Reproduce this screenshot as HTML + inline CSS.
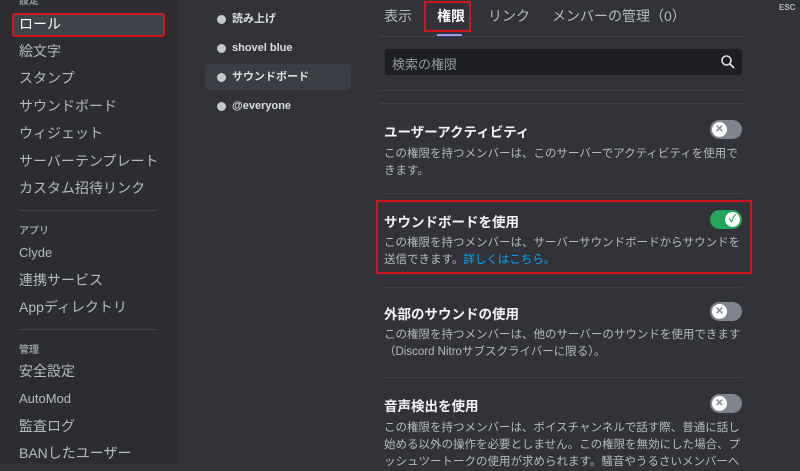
<!DOCTYPE html>
<html><head><meta charset="utf-8"><style>
*{margin:0;padding:0;box-sizing:border-box}
body{width:800px;height:464px;overflow:hidden;background:#313338;font-family:"Liberation Sans","Noto Sans CJK JP",sans-serif;position:relative;color:#dbdee1}
.a{position:absolute;white-space:nowrap}
.side{position:absolute;left:0;top:0;width:178px;height:464px;background:#2b2d31}
.si{position:absolute;left:19px;font-size:14px;color:#b5bac1;line-height:18px}
.hd{position:absolute;left:19px;font-size:10px;color:#949ba4;font-weight:bold}
.dv{position:absolute;height:1px;background:#3f4147}
.role{position:absolute;left:232px;font-size:11px;font-weight:bold;color:#dbdee1;line-height:14px}
.dot{position:absolute;left:217px;width:9px;height:9px;border-radius:50%;background:#c4c9ce}
.tab{position:absolute;top:6px;font-size:14px;color:#b5bac1}
.t{position:absolute;left:384px;font-size:13.5px;color:#f2f3f5;font-weight:bold}
.d{position:absolute;left:384px;font-size:11.5px;color:#b5bac1;line-height:17px;width:360px}
.tg{position:absolute;left:710px;width:32px;height:19px;border-radius:10px;background:#80848e}
.tg i{position:absolute;left:2px;top:2px;width:15px;height:15px;border-radius:50%;background:#fff;color:#80848e;font-style:normal;font-size:10px;text-align:center;line-height:15px;font-weight:bold}
</style></head><body>
<div class="side"></div>
<div class="hd" style="top:-8px">設定</div>
<div style="position:absolute;left:12px;top:13px;width:153px;height:24px;background:#404249;border:2px solid #d0151b;border-radius:3px"></div>
<div class="si" style="top:15px;color:#fff">ロール</div>
<div class="si" style="top:42px">絵文字</div>
<div class="si" style="top:69px">スタンプ</div>
<div class="si" style="top:97px">サウンドボード</div>
<div class="si" style="top:124px">ウィジェット</div>
<div class="si" style="top:152px">サーバーテンプレート</div>
<div class="si" style="top:179px">カスタム招待リンク</div>
<div class="dv" style="left:19px;top:210px;width:138px"></div>
<div class="hd" style="top:222px">アプリ</div>
<div class="si" style="top:244px;font-size:13px">Clyde</div>
<div class="si" style="top:271px">連携サービス</div>
<div class="si" style="top:298px">Appディレクトリ</div>
<div class="dv" style="left:19px;top:329px;width:138px"></div>
<div class="hd" style="top:341px">管理</div>
<div class="si" style="top:362px">安全設定</div>
<div class="si" style="top:390px;font-size:13px">AutoMod</div>
<div class="si" style="top:417px">監査ログ</div>
<div class="si" style="top:444px">BANしたユーザー</div>

<div style="position:absolute;left:205px;top:64px;width:146px;height:26px;background:#3b3d44;border-radius:4px"></div>
<div class="dot" style="top:15px"></div><div class="role" style="top:12px">読み上げ</div>
<div class="dot" style="top:44px"></div><div class="role" style="top:41px">shovel blue</div>
<div class="dot" style="top:73px"></div><div class="role" style="top:70px">サウンドボード</div>
<div class="dot" style="top:102px"></div><div class="role" style="top:99px">@everyone</div>

<div class="tab" style="left:384px">表示</div>
<div style="position:absolute;left:424px;top:1px;width:47px;height:31px;border:2px solid #d0151b"></div>
<div class="tab" style="left:437px;color:#fff;font-weight:bold">権限</div>
<div style="position:absolute;left:437px;top:34px;width:25px;height:2px;background:#949cf7"></div>
<div class="tab" style="left:488px">リンク</div>
<div class="tab" style="left:552px">メンバーの管理（0）</div>
<div class="dv" style="left:380px;top:36px;width:365px"></div>
<div style="position:absolute;left:385px;top:49px;width:357px;height:26px;background:#1e1f22;border-radius:3px"></div>
<div class="a" style="left:392px;top:54px;font-size:13px;color:#949ba4">検索の権限</div>
<svg class="a" style="left:720px;top:54px" width="16" height="16" viewBox="0 0 16 16"><circle cx="6.5" cy="6.5" r="4.5" fill="none" stroke="#dbdee1" stroke-width="1.6"/><path d="M10 10l4 4" stroke="#dbdee1" stroke-width="1.8"/></svg>
<div class="dv" style="left:380px;top:90px;width:365px"></div>
<div class="dv" style="left:380px;top:103px;width:365px"></div>

<div class="t" style="top:121px">ユーザーアクティビティ</div>
<div class="tg" style="top:120px"><i>✕</i></div>
<div class="d" style="top:146px">この権限を持つメンバーは、このサーバーでアクティビティを使用できます。</div>
<div class="dv" style="left:384px;top:193px;width:358px"></div>

<div style="position:absolute;left:376px;top:200px;width:376px;height:74px;border:2px solid #d0151b"></div>
<div class="t" style="top:211px">サウンドボードを使用</div>
<div class="tg" style="top:210px;background:#23a55a"><i style="left:15px;color:#23a55a">✓</i></div>
<div class="d" style="top:235px">この権限を持つメンバーは、サーバーサウンドボードからサウンドを送信できます。<span style="color:#00a8fc">詳しくはこちら。</span></div>
<div class="dv" style="left:384px;top:287px;width:358px"></div>

<div class="t" style="top:303px">外部のサウンドの使用</div>
<div class="tg" style="top:302px"><i>✕</i></div>
<div class="d" style="top:327px">この権限を持つメンバーは、他のサーバーのサウンドを使用できます（Discord Nitroサブスクライバーに限る）。</div>
<div class="dv" style="left:384px;top:377px;width:358px"></div>

<div class="t" style="top:395px">音声検出を使用</div>
<div class="tg" style="top:394px"><i>✕</i></div>
<div class="d" style="top:420px">この権限を持つメンバーは、ボイスチャンネルで話す際、普通に話し始める以外の操作を必要としません。この権限を無効にした場合、プッシュツートークの使用が求められます。騒音やうるさいメンバーへ</div>

<div class="a" style="left:779px;top:3px;font-size:8px;font-weight:bold;color:#b5bac1">ESC</div>
</body></html>
